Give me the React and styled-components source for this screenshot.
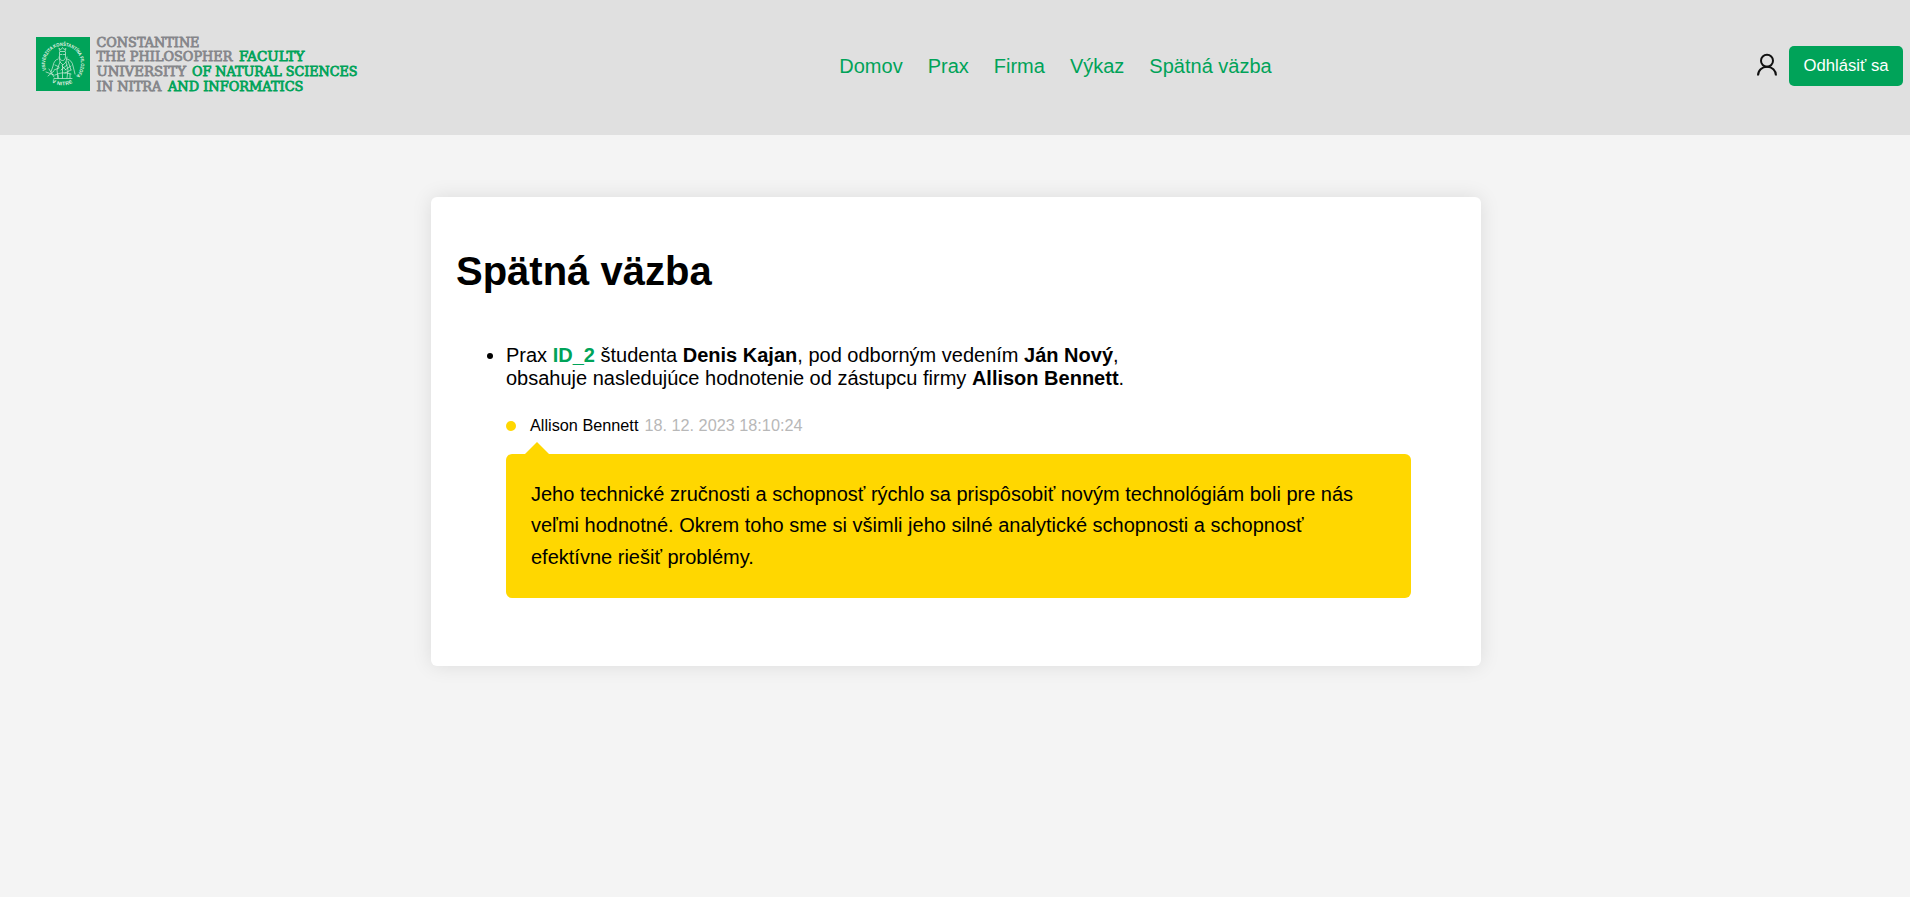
import React from "react";
import styled, { createGlobalStyle } from "styled-components";

const GREEN = "#00a359";
const GREY = "#85868a";

const GlobalStyle = createGlobalStyle`
  * { box-sizing: border-box; }
  body {
    margin: 0;
    background: #f4f4f4;
    color: #000;
    font-family: "Liberation Sans", Arial, sans-serif;
    font-size: 20px;
  }
`;

const Page = styled.div`
  min-height: 100vh;
`;

const Header = styled.header`
  display: flex;
  align-items: flex-start;
  height: 135px;
  padding: 36px 7px 0 36px;
  background: #e0e0e0;
`;

const Logo = styled.svg`
  display: block;
  flex: none;
  width: 324px;
  height: 58px;
  overflow: visible;
`;

const Nav = styled.nav`
  display: flex;
  gap: 25px;
  margin-left: 479.3px;
  padding-top: 19px;
`;

const NavLink = styled.a`
  color: ${GREEN};
  line-height: 23px;
  white-space: nowrap;
`;

const Account = styled.div`
  display: flex;
  align-items: center;
  gap: 11px;
  margin-left: auto;
  padding-top: 10px;
`;

const UserIcon = styled.svg`
  width: 22px;
  height: 24px;
  margin-top: -3px;
`;

const LogoutButton = styled.button`
  width: 114px;
  height: 40px;
  padding: 0 0 1px;
  border: 0;
  border-radius: 5px;
  background: ${GREEN};
  color: #fff;
  font-family: inherit;
  font-size: 16.7px;
  line-height: 19px;
`;

const Card = styled.main`
  width: 1050px;
  height: 469px;
  margin: 62px auto 0 431px;
  padding: 51px 70px 0 25px;
  border-radius: 6px;
  background: #fff;
  box-shadow: 0 0 20px rgba(0, 0, 0, 0.1);
`;

const Title = styled.h1`
  margin: 0;
  font-size: 40px;
  line-height: 46px;
`;

const FeedbackList = styled.ul`
  margin: 50px 0 0;
  padding: 0 0 0 50px;
`;

const Summary = styled.p`
  margin: 0;
  line-height: 23px;
`;

const PracticeId = styled.strong`
  color: ${GREEN};
`;

const Meta = styled.div`
  display: flex;
  align-items: center;
  height: 20px;
  margin-top: 25px;
  font-size: 16.25px;
  white-space: nowrap;
`;

const Dot = styled.span`
  width: 10px;
  height: 10px;
  margin: 1px 14px 0 0;
  border-radius: 50%;
  background: #ffd700;
`;

const DateText = styled.time`
  margin-left: 6px;
  color: #b8b8b8;
`;

const Bubble = styled.blockquote`
  position: relative;
  height: 144px;
  margin: 19px 0 0;
  padding: 25px;
  border-radius: 6px;
  background: #ffd700;
  line-height: 31.3px;
  white-space: nowrap;

  &::before {
    content: "";
    position: absolute;
    left: 19px;
    top: -12px;
    border: 12px solid transparent;
    border-top: 0;
    border-bottom-color: #ffd700;
  }
`;

const logoWords = [
  ["CONSTANTINE", 60.5, 10.6, 103, GREY],
  ["THE PHILOSOPHER", 60.5, 25.2, 136, GREY],
  ["FACULTY", 203, 25.2, 65.5, GREEN],
  ["UNIVERSITY", 60.5, 39.9, 89.5, GREY],
  ["OF NATURAL SCIENCES", 156, 39.9, 165.5, GREEN],
  ["IN NITRA", 60.5, 54.6, 65, GREY],
  ["AND INFORMATICS", 132, 54.6, 135.5, GREEN],
];

function UniversityLogo() {
  return (
    <Logo viewBox="0 0 324 58">
      <rect y="1" width="54" height="54" fill={GREEN} />
      <defs>
        <path id="ring" d="M10.1 34A18 18 0 1 1 39 41.2" />
        <path id="ringBottom" d="M15.900 46.200A21.500 21.500 0 0 0 38.100 46.200" />
      </defs>
      <g fill="#e3f3e8" fontFamily="Liberation Sans, sans-serif" fontWeight="700">
        <text fontSize="4.8">
          <textPath href="#ring" textLength="76" lengthAdjust="spacingAndGlyphs">
            UNIVERZITA KONŠTANTÍNA FILOZOFA
          </textPath>
        </text>
        <text fontSize="5" letterSpacing="0.3">
          <textPath href="#ringBottom">V NITRE</textPath>
        </text>
      </g>
      <g fill="none" stroke="#d8efe0" strokeWidth="0.7" strokeLinecap="round" strokeLinejoin="round">
        <path d="M23 12.500l1 3h5l1-3-2 1-1.500-2-1.500 2zM23.500 16v4q0 4.500 3 4.500T29.500 20v-4M24.500 18.500h1.500M27.500 18.500h1.500" />
        <path d="M23 21l1 5 3 3 3-3 1-5M22 23q-4 1-5 7l-2 6M31 23q5 1 6 7l2 8M24 26l-3 8 1 8M30 26l2 8-1 8M26.500 29v13" />
        <path d="M10 36l8 3M12 40l6-5M13 33l5 8M18 34l5-2M19 39q7-4 16-1M29 34l6-4M29 37l6-3M18 42.500h18M22 39v3M34 38v4" />
        <path d="M19 29l4 2M32 25l3 9M26 30l4 4M31 29l-6 5" />
      </g>
      <g fontFamily="DejaVu Serif, serif" fontSize="13.2" strokeWidth="0.8">
        {logoWords.map(([word, x, y, width, color]) => (
          <text
            key={word}
            x={x}
            y={y}
            textLength={width}
            lengthAdjust="spacingAndGlyphs"
            fill={color}
            stroke={color}
          >
            {word}
          </text>
        ))}
      </g>
    </Logo>
  );
}

const navItems = ["Domov", "Prax", "Firma", "Výkaz", "Spätná väzba"];

export default function App() {
  return (
    <Page>
      <GlobalStyle />
      <Header>
        <UniversityLogo />
        <Nav>
          {navItems.map((item) => (
            <NavLink key={item}>{item}</NavLink>
          ))}
        </Nav>
        <Account>
          <UserIcon viewBox="0 0 22 24" fill="none" stroke="#111" strokeWidth="2">
            <circle cx="11" cy="7.8" r="6" />
            <path d="M2 22.500c0-5.300 4-8.700 9-8.700s9 3.400 9 8.700" />
          </UserIcon>
          <LogoutButton>Odhlásiť sa</LogoutButton>
        </Account>
      </Header>
      <Card>
        <Title>Spätná väzba</Title>
        <FeedbackList>
          <li>
            <Summary>
              Prax <PracticeId>ID_2</PracticeId> študenta <strong>Denis Kajan</strong>, pod odborným vedením{" "}
              <strong>Ján Nový</strong>,
              <br />
              obsahuje nasledujúce hodnotenie od zástupcu firmy <strong>Allison Bennett</strong>.
            </Summary>
            <Meta>
              <Dot />
              Allison Bennett
              <DateText>18. 12. 2023 18:10:24</DateText>
            </Meta>
            <Bubble>
              Jeho technické zručnosti a schopnosť rýchlo sa prispôsobiť novým technológiám boli pre nás
              <br />
              veľmi hodnotné. Okrem toho sme si všimli jeho silné analytické schopnosti a schopnosť
              <br />
              efektívne riešiť problémy.
            </Bubble>
          </li>
        </FeedbackList>
      </Card>
    </Page>
  );
}
